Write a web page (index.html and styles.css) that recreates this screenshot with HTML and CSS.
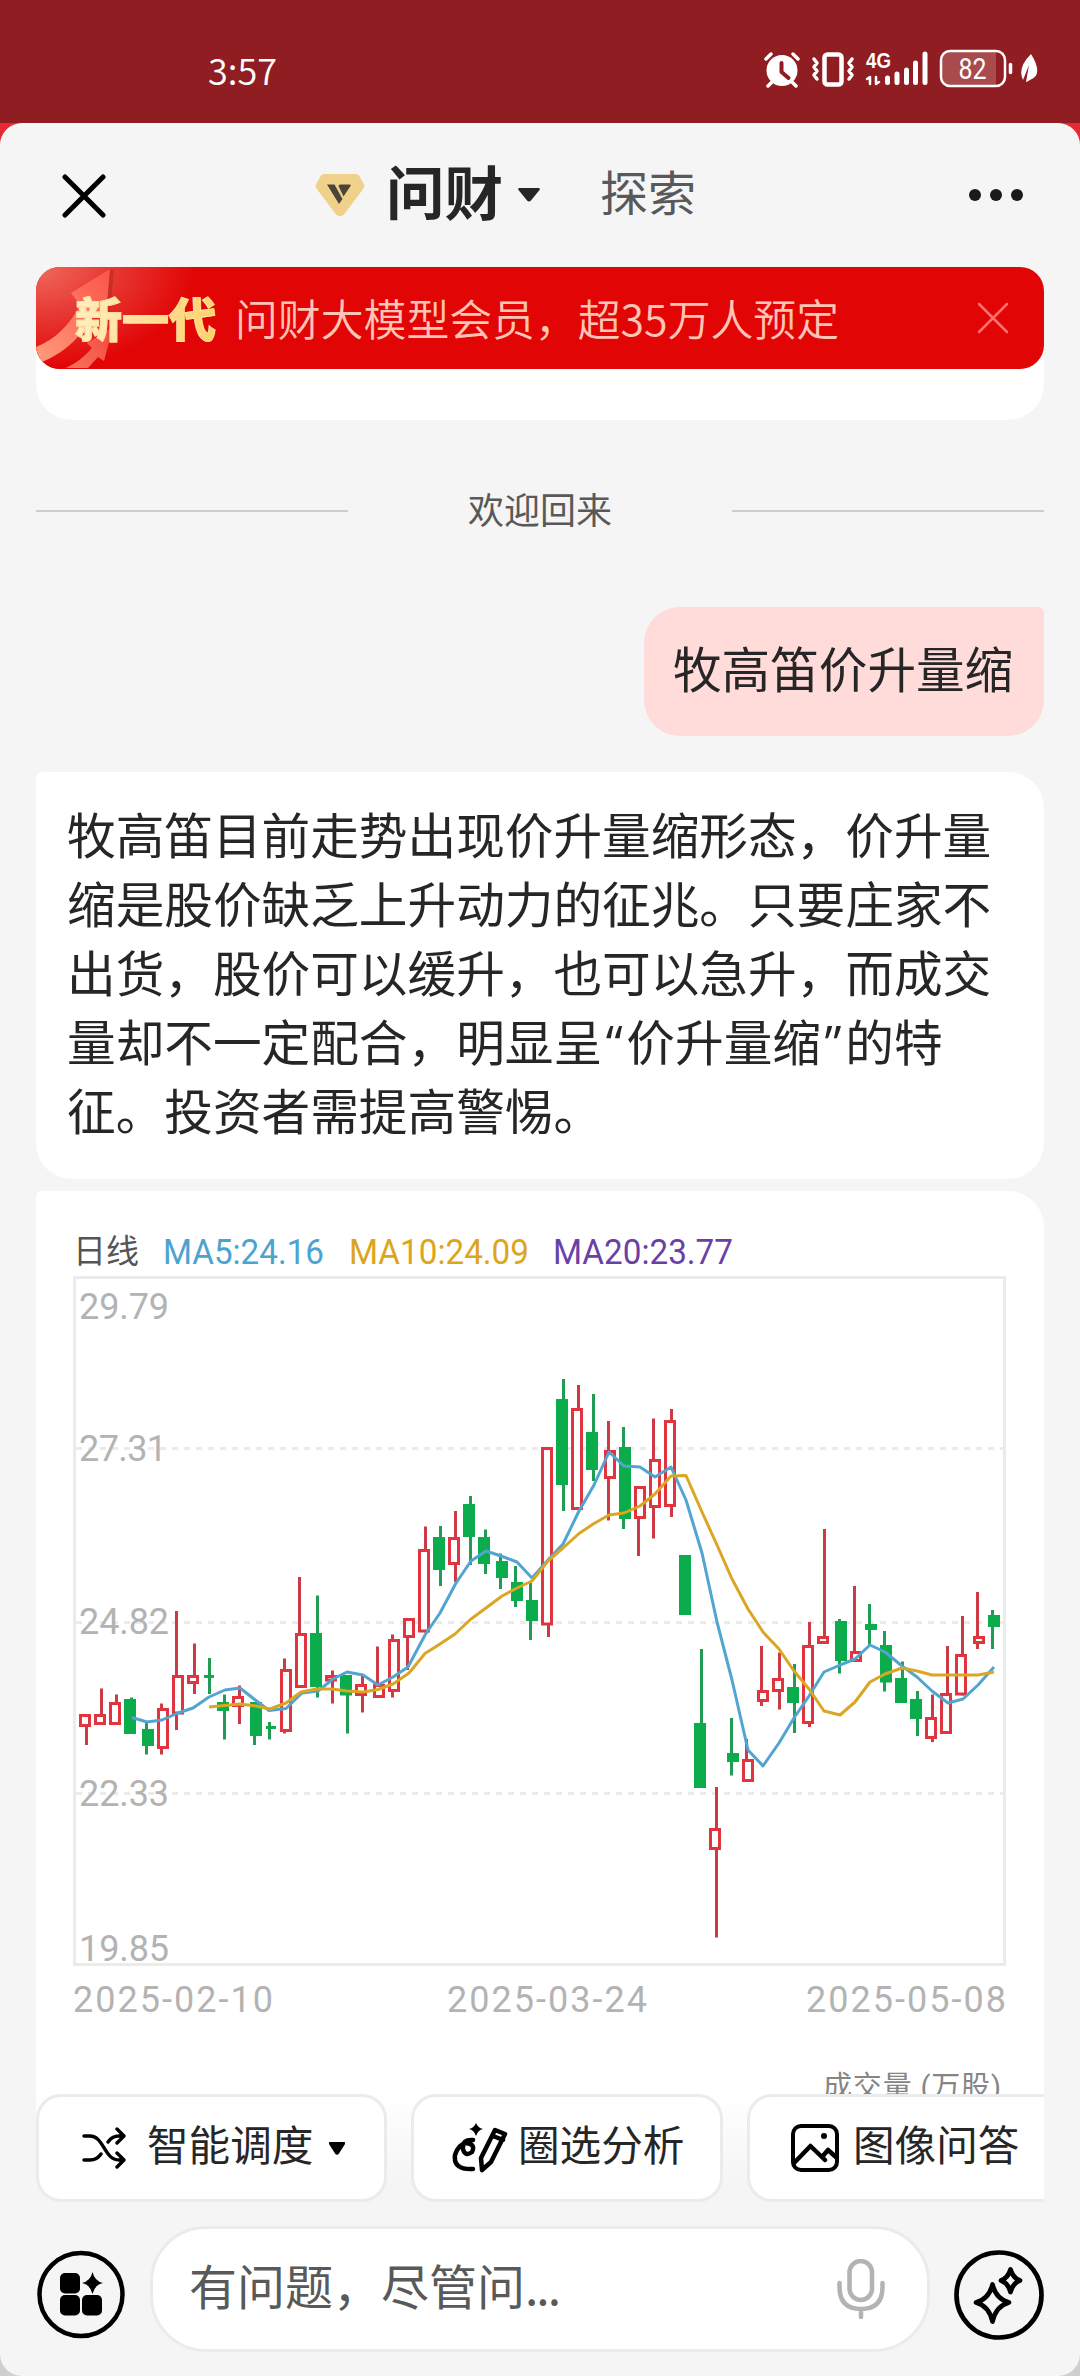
FILE: index.html
```html
<!DOCTYPE html>
<html lang="zh-CN">
<head>
<meta charset="utf-8">
<title>问财</title>
<link rel="stylesheet" href="styles.css">
</head>
<body>
<div class="screen">
  <header class="status">
    <span class="clock">3:57</span>
    <svg class="status-icons" viewBox="764 48 276 42" width="276" height="42">
      <g fill="none" stroke="#fff" stroke-linecap="round" stroke-linejoin="round">
        <circle cx="782" cy="70.500" r="15.500" fill="#fff" stroke="none"/>
        <path d="M766 59l5-5M798 59l-5-5M772 82l-4 4M792 82l4 4" stroke-width="3.500"/>
        <path d="M781.500 63v9l7 6" stroke="#8f1d21" stroke-width="4"/>
        <rect x="824.500" y="54.500" width="17" height="30" rx="3" stroke-width="4.500"/>
        <path d="M814 59l3 4-3 4 3 4-3 4 3 4M852 59l-3 4 3 4-3 4 3 4-3 4" stroke-width="3.500"/>
        <path d="M870 84v-7l-3 2M876 77v7l3-2" stroke-width="2.500"/>
        <path d="M887.500 78v4.500M897 74v8.500M906.500 70v12.500M915.500 63v19.500M925 54v28.500" stroke-width="5"/>
        <path d="M1010.500 64.500v8" stroke-width="3.500"/>
      </g>
      <path d="M951 52h45v33h-45q-9 0-9-9v-15q0-9 9-9z" fill="#a94a4d"/>
      <rect x="941" y="51" width="64" height="35" rx="9" fill="none" stroke="#fff" stroke-width="2.500"/>
      <path d="M1031 54q13 21-1 26-3 2-4 2l3-17-6 15q-6-12 8-26z" fill="#fff"/>
      <text class="net" x="866" y="68" textLength="25" lengthAdjust="spacingAndGlyphs">4G</text>
      <text class="bat" x="958.500" y="79" textLength="28" lengthAdjust="spacingAndGlyphs">82</text>
    </svg>
  </header>

  <main class="sheet">
    <nav class="nav">
      <svg class="close" width="44" height="44" viewBox="0 0 44 44"><path d="M3 3l38 38M41 3L3 41"/></svg>
      <div class="tabs">
        <svg width="50" height="44" viewBox="0 0 50 44"><path d="M9 1h32q2 0 3 1.500l5 9q1 2-.5 4L29 41.500q-4 3.500-8 0L1.500 15.500q-1.500-2-.5-4l5-9Q7 1 9 1z" fill="#efd18b"/><path d="M12 11.500h7.500l8 14.500-3.500 5zM23.500 13q0-1.500 2-1.500h9q2 0 1 1.500l-7 10.500z" fill="#4b4439"/></svg>
        <span class="tab-on">问财</span>
        <svg class="tab-arrow" width="22" height="14" viewBox="0 0 22 14"><path d="M1.500 0h19q2 0 1 2L13 12.500q-2 2-4 0L.5 2Q-.5 0 1.500 0z" fill="#262626"/></svg>
        <span class="tab-off">探索</span>
      </div>
      <svg class="more" width="56" height="14" viewBox="0 0 56 14"><circle cx="7" cy="7" r="6"/><circle cx="28" cy="7" r="6"/><circle cx="49" cy="7" r="6"/></svg>
    </nav>

    <section class="prev-card">
      <div class="banner">
        <svg class="banner-art" width="160" height="102" viewBox="0 0 160 102">
          <defs>
            <radialGradient id="glow" cx="0" cy="0" r="1"><stop offset="0" stop-color="#f26a5c"/><stop offset=".4" stop-color="#e8403a"/><stop offset="1" stop-color="#e10505"/></radialGradient>
            <linearGradient id="arrow" x1="0" y1="1" x2="1" y2="0"><stop offset="0" stop-color="#ff9a7b"/><stop offset="1" stop-color="#fa5547"/></linearGradient>
          </defs>
          <rect width="160" height="102" fill="url(#glow)"/>
          <path d="M5 95Q40 80 60 46L73 56 78 3 73 2z" fill="#b92820" opacity=".6"/>
          <path d="M0 80Q28 69 44 38L35 26 74 2 70 50 60 43Q42 80 6 95L0 90z" fill="url(#arrow)"/>
          <path d="M30 101Q45 94 56 81L51 76 77 60 68 94 62 90 52 101z" fill="url(#arrow)" opacity=".75"/>
        </svg>
        <strong>新一代</strong>
        <span>问财大模型会员，超35万人预定</span>
        <svg class="banner-close" width="32" height="32" viewBox="0 0 32 32"><path d="M2 2l28 28M30 2L2 30"/></svg>
      </div>
    </section>

    <div class="welcome"><i></i><span>欢迎回来</span><i></i></div>

    <div class="question">牧高笛价升量缩</div>

    <article class="answer">牧高笛目前走势出现价升量缩形态，价升量<br>缩是股价缺乏上升动力的征兆。只要庄家不<br>出货，股价可以缓升，也可以急升，而成交<br>量却不一定配合，明显呈<span class="quote">“</span>价升量缩<span class="quote">”</span>的特<br>征。投资者需提高警惕。</article>

    <section class="chart-card">
      <svg class="chart" viewBox="36 1191 1008 903" width="1008" height="903">
        <g class="legend">
          <text class="period" x="73" y="1262.500" fill="#555" textLength="66">日线</text>
          <text x="163" y="1263.500" fill="#4ba3d1" textLength="161" lengthAdjust="spacingAndGlyphs">MA5:24.16</text>
          <text x="349" y="1263.500" fill="#dda51c" textLength="180" lengthAdjust="spacingAndGlyphs">MA10:24.09</text>
          <text x="553" y="1263.500" fill="#6a3fa8" textLength="180" lengthAdjust="spacingAndGlyphs">MA20:23.77</text>
        </g>
        <g class="grid">
          <path stroke-dasharray="6 6" d="M76 1448.500H1003M76 1622.500H1003M76 1793.500H1003"/>
          <rect x="74.500" y="1277.500" width="930" height="687"/>
        </g>
        <g class="axis">
          <text x="79" y="1319" textLength="90">29.79</text>
          <text x="79" y="1461" textLength="88">27.31</text>
          <text x="79" y="1634" textLength="90">24.82</text>
          <text x="79" y="1806" textLength="90">22.33</text>
          <text x="79" y="1961" textLength="90">19.85</text>
          <text x="73" y="2012" textLength="200">2025-02-10</text>
          <text x="447" y="2012" textLength="200">2025-03-24</text>
          <text x="806" y="2012" textLength="200">2025-05-08</text>
        </g>
        <text class="volume" x="823" y="2097" textLength="178">成交量 (万股)</text>
        <g id="candles"></g>
        <polyline class="ma" stroke="#51a5d0" points="132,1717.500 147,1722 162,1720 178,1713 193,1708 209,1697 225,1690 240,1688 254,1699 269,1710.500 286,1708.500 302,1693 318,1691 333,1679 347,1672 363,1675 378,1685 393,1677 408,1667 425,1635 440,1613 456,1583 471,1561 486,1551 501,1556 517,1562 532,1578 548,1560 563,1544 579,1511 594,1485 609,1452 624,1466 640,1467 655,1477 671,1467 686,1500 702,1553 717,1622 732,1680 748,1750 763,1766 779,1743 794,1718 809,1696 824,1672 840,1665 855,1659 870,1645 885,1652 902,1666 917,1677 932,1691 948,1703 963,1699 978,1685 994,1667"/>
        <polyline class="ma" stroke="#dba623" points="209,1707 240,1704 256,1706 270,1709 286,1703 301,1692 317,1689 332,1689 347,1691 363,1692 378,1689.500 393,1684 409,1673 425,1653.500 440,1644 455,1634 471,1619 486,1608 502,1596 517,1588 532,1581 548,1561 563,1548 579,1533.500 594,1523.500 609,1515 624,1513 640,1506 655,1494 671,1476 686,1475.500 702,1512 717,1545 732,1579 748,1609 763,1632 779,1649 794,1671 809,1689 824,1711 840,1715 855,1702 870,1682 885,1674 902,1668 917,1671 932,1675 963,1675 978,1675 994,1672"/>
      </svg>
    </section>

    <footer class="dock">
      <div class="chips">
        <button class="chip chip-a">
          <svg width="45" height="42" viewBox="0 0 45 42"><path d="M2 9h6c14 0 14 24 29 24h5M2 33h6q7 0 11-6M26 15q4-6 11-6h5M35 2l7 7-7 7M35 26l7 7-7 7"/></svg>
          <span>智能调度</span>
          <svg class="caret" width="16" height="13" viewBox="0 0 16 13"><path d="M1 0h14q2 0 1 2l-6 9.500q-2 2.500-4 0L0 2q-1-2 1-2z"/></svg>
        </button>
        <button class="chip chip-b">
          <svg width="56" height="50" viewBox="0 0 56 50"><path d="M21 17Q10 16 11 26q2 8 9 3 4-8-6-9-8 2-11 12-2 15 18 14M30 47l-1-12L43 7l10 4-14 28zM41 13l10 4" stroke-width="4.500"/><path class="solid" d="M24 0q2 5 7 6-5 1-7 7-2-6-7-7 5-1 7-6z"/></svg>
          <span>圈选分析</span>
        </button>
        <button class="chip chip-c">
          <svg width="48" height="48" viewBox="0 0 48 48"><rect x="2" y="2" width="44" height="44" rx="8" stroke-width="4"/><path d="M3 39l16.500-17L34 36M31 33l6-7 9 8" stroke-width="4.500"/><circle class="solid" cx="33" cy="12" r="3"/></svg>
          <span>图像问答</span>
        </button>
      </div>
      <div class="composer">
        <svg class="apps" width="88" height="90" viewBox="0 0 88 90"><circle cx="44" cy="44.500" r="41.500" fill="none" stroke="#000" stroke-width="4.500"/><rect x="23" y="23" width="20" height="20.500" rx="5"/><rect x="23" y="45" width="20" height="20.500" rx="5"/><rect x="45" y="45" width="20" height="20.500" rx="5"/><path d="M55.500 22q2 9 10.500 11-8.500 2-10.500 11-2-9-10.500-11 8.500-2 10.500-11z"/></svg>
        <div class="input">
          <span>有问题，尽管问<span class="dots">...</span></span>
          <svg width="48" height="60" viewBox="0 0 48 60"><rect x="12.500" y="2" width="22.500" height="39" rx="11.250"/><path d="M2.500 24v4q0 22 21.500 22t21.500-22v-4M24 51v7"/></svg>
        </div>
        <svg class="magic" width="90" height="90" viewBox="0 0 90 90"><circle cx="45" cy="45" r="42.500"/><path d="M38.500 34.500Q42 49 55 52.500 42 56 38.500 71.500 35 56 22 52.500 35 49 38.500 34.500zM56.500 19.500Q59 28 66 30.500 59 33 56.500 42 54 33 47 30.500 54 28 56.500 19.500z"/></svg>
      </div>
    </footer>
  </main>
</div>
<script src="chart.js"></script>
</body>
</html>
```
FILE: styles.css
```css
* { box-sizing: border-box; }
body {
  margin: 0;
  background: #cfcfcf;
  font-family: Roboto, "Noto Sans CJK SC", sans-serif;
  color: #262626;
}
.screen {
  width: 1080px;
  height: 2376px;
  display: flex;
  flex-direction: column;
  overflow: hidden;
  background: linear-gradient(#e62a33 300px, #cfcfcf 300px);
}
.status {
  height: 123px;
  flex: none;
  display: flex;
  justify-content: space-between;
  align-items: flex-start;
  padding: 48px 40px 0 208px;
  background: #8f1d21;
  color: #fff;
}
.clock {
  font-family: "Noto Sans CJK SC", sans-serif;
  font-weight: 350;
  font-size: 36px;
  line-height: 42px;
}
.net { font: 700 22px "Liberation Sans", sans-serif; fill: #fff; }
.bat { font: 400 30px Roboto, sans-serif; fill: #fff; }
.sheet {
  flex: 1;
  min-height: 0;
  display: flex;
  flex-direction: column;
  padding: 0 36px;
  border-radius: 22px;
  background: #f5f5f5;
}
.nav {
  height: 144px;
  flex: none;
  display: flex;
  align-items: center;
  padding: 0 20px 0 26px;
}
.close { fill: none; stroke: #000; stroke-width: 5; stroke-linecap: round; margin-top: 2px; }
.tabs { display: flex; align-items: center; height: 80px; margin-left: 209px; }
.tab-on { font-size: 58.500px; font-weight: 700; line-height: 80px; margin-left: 21px; }
.tab-arrow { margin: 0 60px 0 15px; }
.tab-off { font-size: 48px; line-height: 80px; color: #595959; }
.more { fill: #1a1a1a; margin-left: auto; }
.prev-card {
  height: 153px;
  flex: none;
  background: linear-gradient(#f5f5f5 60px, #fff 60px);
  border-radius: 24px 24px 36px 36px;
}
.banner {
  position: relative;
  height: 102px;
  display: flex;
  align-items: center;
  border-radius: 24px;
  overflow: hidden;
  padding: 0 35px 0 39px;
  background: #e10505;
}
.banner-art { position: absolute; left: 0; top: 0; }
.banner strong {
  position: relative;
  top: 3px;
  font-size: 47px;
  font-weight: 900;
  line-height: 70px;
  background: linear-gradient(100deg, #fff0c8, #ffcf68);
  -webkit-background-clip: text;
  background-clip: text;
  color: transparent;
  -webkit-text-stroke: 1px #ffe09a;
}
.banner span {
  margin-left: 19px;
  padding-bottom: 3px;
  flex: 1;
  font-family: "Noto Sans CJK SC", sans-serif;
  font-size: 42.850px;
  font-weight: 350;
  line-height: 70px;
  color: #ffc4b4;
  white-space: nowrap;
}
.banner-close { fill: none; stroke: #ff6f6b; stroke-width: 2.500; stroke-linecap: round; }
.welcome {
  height: 187px;
  flex: none;
  display: flex;
  align-items: center;
  justify-content: space-between;
  padding-bottom: 5px;
}
.welcome i { width: 312px; height: 2px; background: #cdcdcd; }
.welcome span { font-size: 36px; color: #595959; line-height: 50px; padding-top: 2px; }
.question {
  align-self: flex-end;
  flex: none;
  width: 400px;
  height: 129px;
  padding: 0 0 0 29px;
  font-size: 48.600px;
  line-height: 130px;
  white-space: nowrap;
  border-radius: 36px 6px 36px 36px;
  background: #ffdbda;
}
.answer {
  flex: none;
  height: 407px;
  margin-top: 36px;
  padding: 31px 0 0 31px;
  border-radius: 6px 36px 36px 36px;
  background: #fff;
  font-size: 48.650px;
  line-height: 69px;
  white-space: nowrap;
}
.quote { display: inline-block; width: 24.300px; text-align: center; font-family: "Open Sans", sans-serif; line-height: 60px; }
.chart-card {
  flex: none;
  height: 1011px;
  margin-top: 12px;
  border-radius: 6px 36px 0 0;
  background: #fff;
}
.chart { display: block; }
.chart text { font-family: Roboto, "Noto Sans CJK SC", sans-serif; }
.legend text { font-size: 35px; }
.legend .period { font-size: 33px; }
.axis text { font-size: 36px; fill: #b3b3b3; }
.chart .volume { font-size: 29px; fill: #858585; }
.grid path, .grid rect { fill: none; stroke: #ebebeb; stroke-width: 3; }
.wick { stroke-width: 3; }
.up { stroke: #e0353f; fill: #fff; }
.up.wick { stroke: #cd3945; }
.down { fill: #0aac4b; }
.down.wick { stroke: #219c54; }
.ma { fill: none; stroke-width: 3; stroke-linejoin: round; }
.dock { flex: none; margin-top: -108px; position: relative; }
.chips {
  display: flex;
  gap: 24px;
  height: 108px;
  overflow: hidden;
  background: linear-gradient(rgba(245, 245, 245, 0), #f5f5f5 80%);
}
.chip {
  flex: none;
  display: flex;
  align-items: center;
  border: 3px solid #ebebeb;
  border-radius: 25px;
  background: #fff;
  padding: 0;
  font: 400 41.600px/60px "Noto Sans CJK SC", sans-serif;
  color: #262626;
}
.chip svg { fill: none; stroke: #000; stroke-width: 3.400; stroke-linecap: round; stroke-linejoin: round; }
.chip .solid, .chip .caret path { fill: #000; stroke: none; }
.chip span { padding-bottom: 10px; }
.chip-a { width: 351px; padding-left: 43px; }
.chip-a span { margin: 0 16px 0 20px; }
.chip-b { width: 312px; padding-left: 38px; }
.chip-b span { margin-left: 10px; }
.chip-c { width: 320px; padding-left: 41px; }
.chip-c span { margin-left: 14px; }
.composer { display: flex; align-items: flex-start; padding-top: 24px; }
.apps { margin: 24px 26px 0 1px; flex: none; }
.input {
  width: 780px;
  height: 126px;
  margin-left: -1px;
  flex: none;
  display: flex;
  justify-content: space-between;
  align-items: center;
  padding: 0 42px 0 36px;
  border: 3px solid #ebebeb;
  border-radius: 56px;
  background: #fff;
  font: 400 48px/70px "Noto Sans CJK SC", sans-serif;
  color: #595959;
}
.input > span { padding-bottom: 10px; }
.dots { letter-spacing: -2px; }
.input svg { fill: none; stroke: #b3b3b3; stroke-width: 4.500; stroke-linecap: round; }
.magic { margin: 24px 0 0 24px; flex: none; fill: none; stroke: #000; stroke-width: 4.700; stroke-linejoin: round; }
```
FILE: chart.js
```js
// Daily candles: [body left, wick x, high, body top, body bottom, low, rising]
const candles = [
  [79,86.5,1714,1714,1727,1745,1],[94,101.5,1688.5,1714,1725,1725,1],[109,116.5,1694.5,1702,1725,1725,1],
  [124,131.5,1697.5,1699,1734,1734,0],[142,146.5,1723,1729,1746,1754.5,0],[157,161.5,1703.5,1708,1749,1754.5,1],
  [172,176.5,1611,1675,1714.5,1730,1],[187,194.5,1643.5,1675,1684,1694,1],[203,209.5,1658,1675,1678,1694,0],
  [217,224.5,1694.5,1702,1711,1739.5,0],[232,239.5,1685.5,1696,1707,1724,1],[250,254.5,1702,1702,1736,1745,0],
  [265,269.5,1722,1726,1729,1739.5,0],[280,284.5,1658.5,1669,1732,1733.5,1],[295,299.5,1577,1633,1688,1688,1],
  [310,317.5,1595.5,1633,1687,1697.5,0],[325,332.5,1670.5,1675,1681.5,1703.5,1],[340,347.5,1675,1675,1695.5,1733.5,0],
  [355,362.5,1675,1684,1696,1712.5,1],[373,377.5,1646.5,1684,1698,1698,1],[388,392.5,1634.5,1639,1692,1697.5,1],
  [403,407.5,1618,1618,1638,1670,1],[418,425.5,1526.5,1549,1632.5,1632.5,1],[433,440.5,1526,1537,1570,1586,0],
  [448,455.5,1511,1537,1565,1582,1],[463,470.5,1496,1504,1537,1565,0],[478,485.5,1529.5,1537,1564,1574,0],
  [496,500.5,1553.5,1561,1578,1589,0],[511,515.5,1566,1582,1601,1607,0],[526,530.5,1583,1600,1621,1640,0],
  [541,548.5,1447,1447,1625.5,1637,1],[556,563.5,1379,1399,1485,1511,0],[571,578.5,1385,1408,1510,1510,1],
  [586,593.5,1394,1432,1470,1481,0],[604,608.5,1421,1450,1479,1520.5,1],[619,623.5,1427,1447,1519,1529,0],
  [634,638.5,1486,1486,1519,1556,1],[649,653.5,1418.5,1459,1508,1538.5,1],[664,671.5,1409,1420,1507,1517,1],
  [679,686.5,1555,1555,1615,1615,0],[694,701.5,1649,1723,1788,1788,0],[709,716.5,1787,1828,1850,1937.5,1],
  [727,731.5,1718,1753,1762,1775.5,0],[742,746.5,1739,1759,1782,1782,1],[757,761.5,1646,1690,1702,1706,1],
  [772,779.5,1652.5,1678,1692,1709.5,1],[787,794.5,1664,1687,1703,1733,0],[802,809.5,1622,1645,1724,1727,1],
  [817,824.5,1529,1636,1644,1644,1],[835,839.5,1619,1621,1661,1673.5,0],[850,854.5,1586,1651,1662,1662,1],
  [865,869.5,1604,1624,1630,1646,0],[880,884.5,1631,1645,1682.5,1691.5,0],[895,902.5,1661.5,1678,1703,1703,0],
  [910,917.5,1691,1699,1719,1736,0],[925,932.5,1694.5,1717,1739,1742,1],[940,947.5,1646,1693,1734,1734,1],
  [955,962.5,1616,1654,1695.5,1695.5,1],[973,977.5,1592,1636,1644,1649,1],[988,992.5,1610,1615,1627,1649,0]
];

document.getElementById("candles").innerHTML = candles.map(([left, x, high, top, bottom, low, rising]) => {
  const kind = rising ? "up" : "down";
  const inset = rising ? 1.5 : 0;
  const doji = bottom - top === 3 ? 1 : 0;
  const size = `x="${left + inset + doji}" y="${top + inset}" width="${12 - 2 * (inset + doji)}" height="${bottom - top - 2 * inset}"`;
  return `<path class="${kind} wick" d="M${x} ${high}V${low}"/><rect class="${kind}" stroke-width="${inset * 2}" ${size}/>`;
}).join("");
```
